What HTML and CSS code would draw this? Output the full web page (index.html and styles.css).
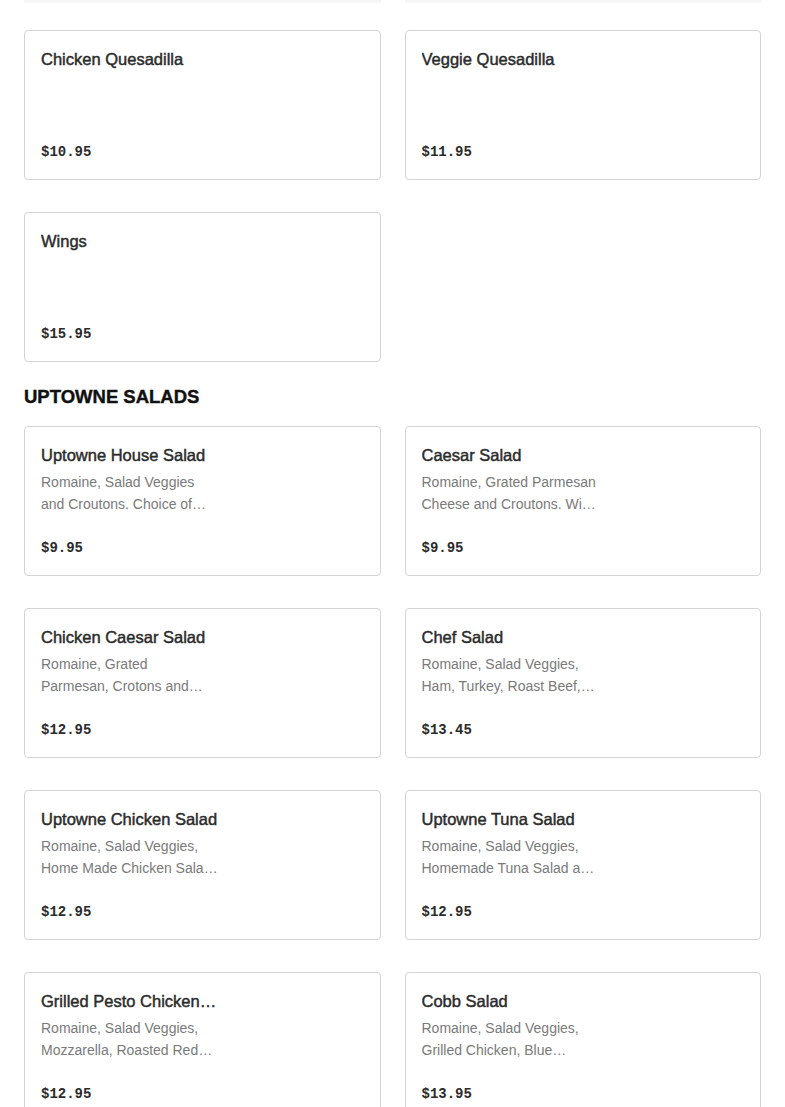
FILE: index.html
```html
<!DOCTYPE html>
<html lang="en">
<head>
<meta charset="utf-8">
<title>Menu</title>
<link rel="stylesheet" href="styles.css">
</head>
<body>
<div class="page">
  <div class="grid stub-row">
    <div class="stub"></div>
    <div class="stub"></div>
  </div>

  <div class="grid">
    <div class="card">
      <div class="info">
        <div class="title">Chicken Quesadilla</div>
      </div>
      <div class="price">$10.95</div>
    </div>
    <div class="card">
      <div class="info">
        <div class="title">Veggie Quesadilla</div>
      </div>
      <div class="price">$11.95</div>
    </div>
    <div class="card">
      <div class="info">
        <div class="title">Wings</div>
      </div>
      <div class="price">$15.95</div>
    </div>
  </div>

  <h2 class="section-title">Uptowne Salads</h2>

  <div class="grid">
    <div class="card">
      <div class="info">
        <div class="title">Uptowne House Salad</div>
        <div class="desc">Romaine, Salad Veggies and Croutons. Choice of dressing on the side.</div>
      </div>
      <div class="price">$9.95</div>
    </div>
    <div class="card">
      <div class="info">
        <div class="title">Caesar Salad</div>
        <div class="desc">Romaine, Grated Parmesan Cheese and Croutons. With Caesar dressing.</div>
      </div>
      <div class="price">$9.95</div>
    </div>
    <div class="card">
      <div class="info">
        <div class="title">Chicken Caesar Salad</div>
        <div class="desc">Romaine, Grated Parmesan, Crotons and Grilled Chicken.</div>
      </div>
      <div class="price">$12.95</div>
    </div>
    <div class="card">
      <div class="info">
        <div class="title">Chef Salad</div>
        <div class="desc">Romaine, Salad Veggies, Ham, Turkey, Roast Beef, Cheese and Egg.</div>
      </div>
      <div class="price">$13.45</div>
    </div>
    <div class="card">
      <div class="info">
        <div class="title">Uptowne Chicken Salad</div>
        <div class="desc">Romaine, Salad Veggies, Home Made Chicken Salad and Croutons.</div>
      </div>
      <div class="price">$12.95</div>
    </div>
    <div class="card">
      <div class="info">
        <div class="title">Uptowne Tuna Salad</div>
        <div class="desc">Romaine, Salad Veggies, Homemade Tuna Salad and Croutons.</div>
      </div>
      <div class="price">$12.95</div>
    </div>
    <div class="card">
      <div class="info">
        <div class="title">Grilled Pesto Chicken Salad</div>
        <div class="desc">Romaine, Salad Veggies, Mozzarella, Roasted Red Peppers and Pesto Chicken.</div>
      </div>
      <div class="price">$12.95</div>
    </div>
    <div class="card">
      <div class="info">
        <div class="title">Cobb Salad</div>
        <div class="desc">Romaine, Salad Veggies, Grilled Chicken, Blue Cheese, Bacon and Egg.</div>
      </div>
      <div class="price">$13.95</div>
    </div>
  </div>
</div>
</body>
</html>
```

FILE: styles.css
```css
* {
  box-sizing: border-box;
}

html, body {
  margin: 0;
  padding: 0;
  background: #ffffff;
}

body {
  font-family: "Liberation Sans", Arial, sans-serif;
  color: #2a2a2a;
}

.page {
  padding: 0 24px;
}

.grid {
  display: grid;
  grid-template-columns: 1fr 1fr;
  column-gap: 24px;
  row-gap: 32px;
}

.stub-row {
  margin-bottom: 27px;
}

.stub {
  height: 3px;
  background: linear-gradient(#f4f4f4, #fafafa);
}

.card {
  height: 150px;
  border: 1px solid #d4d4d4;
  border-radius: 4px;
  padding: 16px;
  display: flex;
  flex-direction: column;
  justify-content: space-between;
  background: #fff;
}

.info {
  width: 55%;
}

.title {
  font-size: 16.5px;
  line-height: 24px;
  font-weight: 400;
  color: #2b2b2b;
  -webkit-text-stroke: 0.45px #2b2b2b;
  white-space: nowrap;
  overflow: hidden;
  text-overflow: ellipsis;
}

.desc {
  margin-top: 4px;
  font-size: 14px;
  line-height: 22px;
  color: #7a7a7a;
  display: -webkit-box;
  -webkit-line-clamp: 2;
  -webkit-box-orient: vertical;
  overflow: hidden;
}

.price {
  font-family: "Liberation Mono", "Courier New", monospace;
  font-size: 14px;
  line-height: 22px;
  font-weight: 700;
  color: #2b2b2b;
}

.section-title {
  margin: 23px 0 17px;
  font-size: 18.5px;
  line-height: 24px;
  font-weight: 700;
  text-transform: uppercase;
  color: #111111;
  -webkit-text-stroke: 0.4px #111111;
}
```
